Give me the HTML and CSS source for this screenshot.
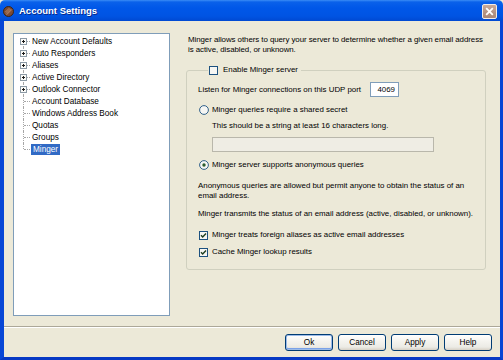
FILE: index.html
```html
<!DOCTYPE html>
<html>
<head>
<meta charset="utf-8">
<link rel="stylesheet" href="styles.css">
</head>
<body>
<div class="window">
  <div class="titlebar">
    <svg class="app-icon" width="11" height="11" viewBox="0 0 11 11">
      <circle cx="5.5" cy="5.5" r="5" fill="#7a4a33" stroke="#3a2418" stroke-width="1"/>
      <path d="M3 7.5 L7.5 3 M3.5 8.8 L8.8 3.5 M2.2 6.3 L6.3 2.2" stroke="#c89a7c" stroke-width="0.8"/>
    </svg>
    <span class="title">Account Settings</span>
    <div class="close">
      <svg width="9" height="9" viewBox="0 0 9 9"><path d="M1.2 1.2 L7.8 7.8 M7.8 1.2 L1.2 7.8" stroke="#fff" stroke-width="1.8"/></svg>
    </div>
  </div>
  <div class="frame">
    <div class="content">
      <div class="tree">
        <ul class="tree-list">
          <li class="node first"><span class="gutter"><svg class="plus" width="7" height="7" viewBox="0 0 7 7"><rect x="0.5" y="0.5" width="6" height="6" fill="#fbfbf8" stroke="#8c9aa6"/><path d="M2 3.5 H5 M3.5 2 V5" stroke="#1a1a1a"/></svg></span><span class="label">New Account Defaults</span></li>
          <li class="node"><span class="gutter"><svg class="plus" width="7" height="7" viewBox="0 0 7 7"><rect x="0.5" y="0.5" width="6" height="6" fill="#fbfbf8" stroke="#8c9aa6"/><path d="M2 3.5 H5 M3.5 2 V5" stroke="#1a1a1a"/></svg></span><span class="label">Auto Responders</span></li>
          <li class="node"><span class="gutter"><svg class="plus" width="7" height="7" viewBox="0 0 7 7"><rect x="0.5" y="0.5" width="6" height="6" fill="#fbfbf8" stroke="#8c9aa6"/><path d="M2 3.5 H5 M3.5 2 V5" stroke="#1a1a1a"/></svg></span><span class="label">Aliases</span></li>
          <li class="node"><span class="gutter"><svg class="plus" width="7" height="7" viewBox="0 0 7 7"><rect x="0.5" y="0.5" width="6" height="6" fill="#fbfbf8" stroke="#8c9aa6"/><path d="M2 3.5 H5 M3.5 2 V5" stroke="#1a1a1a"/></svg></span><span class="label">Active Directory</span></li>
          <li class="node"><span class="gutter"><svg class="plus" width="7" height="7" viewBox="0 0 7 7"><rect x="0.5" y="0.5" width="6" height="6" fill="#fbfbf8" stroke="#8c9aa6"/><path d="M2 3.5 H5 M3.5 2 V5" stroke="#1a1a1a"/></svg></span><span class="label">Outlook Connector</span></li>
          <li class="node"><span class="gutter"></span><span class="label">Account Database</span></li>
          <li class="node"><span class="gutter"></span><span class="label">Windows Address Book</span></li>
          <li class="node"><span class="gutter"></span><span class="label">Quotas</span></li>
          <li class="node"><span class="gutter"></span><span class="label">Groups</span></li>
          <li class="node last"><span class="gutter"></span><span class="label selected">Minger</span></li>
        </ul>
      </div>
      <div class="panel">
        <p class="desc">Minger allows others to query your server to determine whether a given email address<br>is active, disabled, or unknown.</p>
        <fieldset class="group">
          <legend class="legend">
            <span class="opt">
              <svg class="box" width="9" height="9" viewBox="0 0 9 9"><rect x="0.5" y="0.5" width="8" height="8" fill="#f6f6f3" stroke="#1c5180"/></svg>
              <span>Enable Minger server</span>
            </span>
          </legend>
          <div class="port-row">
            <span>Listen for Minger connections on this UDP port</span>
            <span class="edit port">4069</span>
          </div>
          <div class="opt r1">
            <svg class="box" width="10" height="10" viewBox="0 0 10 10"><circle cx="5" cy="5" r="4.4" fill="#f6f6f3" stroke="#1c5180" stroke-width="0.9"/></svg>
            <span>Minger queries require a shared secret</span>
          </div>
          <div class="hint">This should be a string at least 16 characters long.</div>
          <div class="edit secret"></div>
          <div class="opt r2">
            <svg class="box" width="10" height="10" viewBox="0 0 10 10"><circle cx="5" cy="5" r="4.4" fill="#f6f6f3" stroke="#1c5180" stroke-width="0.9"/><circle cx="5" cy="5" r="1.7" fill="#2d5c2d"/></svg>
            <span>Minger server supports anonymous queries</span>
          </div>
          <p class="note anon">Anonymous queries are allowed but permit anyone to obtain the status of an<br>email address.</p>
          <p class="note transmit">Minger transmits the status of an email address (active, disabled, or unknown).</p>
          <div class="opt c1">
            <svg class="box" width="9" height="9" viewBox="0 0 9 9"><rect x="0.5" y="0.5" width="8" height="8" fill="#f6f6f3" stroke="#1c5180"/><path d="M2 4.3 L3.7 6.1 L7 2.6" fill="none" stroke="#1e3d1e" stroke-width="1.4"/></svg>
            <span>Minger treats foreign aliases as active email addresses</span>
          </div>
          <div class="opt c2">
            <svg class="box" width="9" height="9" viewBox="0 0 9 9"><rect x="0.5" y="0.5" width="8" height="8" fill="#f6f6f3" stroke="#1c5180"/><path d="M2 4.3 L3.7 6.1 L7 2.6" fill="none" stroke="#1e3d1e" stroke-width="1.4"/></svg>
            <span>Cache Minger lookup results</span>
          </div>
        </fieldset>
      </div>
    </div>
    <div class="separator"></div>
    <div class="buttons">
      <button class="btn default">Ok</button>
      <button class="btn">Cancel</button>
      <button class="btn">Apply</button>
      <button class="btn">Help</button>
    </div>
  </div>
</div>
</body>
</html>
```
FILE: styles.css
```css
* { box-sizing: border-box; }
html, body { margin: 0; padding: 0; }
body {
  width: 503px;
  height: 360px;
  overflow: hidden;
  font-family: "Liberation Sans", Arial, sans-serif;
  font-size: 8.2px;
  color: #000;
  background: #ece9d8;
}
.window {
  width: 503px;
  height: 360px;
  display: flex;
  flex-direction: column;
}
.titlebar {
  height: 21px;
  flex: none;
  display: flex;
  align-items: center;
  padding: 0 6px 0 3px;
  background: linear-gradient(to bottom, #3b8cf5 0px, #0a61ea 2px, #0057e8 8px, #0054e3 16px, #0049d2 21px);
  border-radius: 5px 5px 0 0;
}
.app-icon { flex: none; margin-top: 1px; }
.title {
  margin-left: 5px;
  color: #fff;
  font-weight: bold;
  font-size: 9.5px;
  text-shadow: 1px 1px 0 #0a2a8a;
  flex: 1;
}
.close {
  width: 15px;
  height: 15px;
  border: 1px solid #f1ece8;
  border-radius: 2px;
  background: linear-gradient(to bottom, #c9aa9a, #b39282 60%, #a98878);
  display: flex;
  align-items: center;
  justify-content: center;
  margin-top: 1px;
}
.frame {
  flex: 1;
  display: flex;
  flex-direction: column;
  border-left: 4px solid #0847d6;
  border-right: 3px solid #0844d4;
  border-bottom: 3px solid #0739c4;
  background: #ece9d8;
  min-height: 0;
}
.content {
  flex: 1;
  display: flex;
  padding: 12px 14px 0 9px;
  min-height: 0;
}
.tree {
  width: 157px;
  height: 283px;
  flex: none;
  background: #fff;
  border: 1px solid #7f9db9;
  padding-top: 1px;
}
.tree-list {
  list-style: none;
  margin: 0;
  padding: 0;
}
.node {
  height: 12px;
  display: flex;
  align-items: center;
}
.gutter {
  position: relative;
  width: 17px;
  height: 12px;
  flex: none;
}
.gutter::before {
  content: "";
  position: absolute;
  left: 9px;
  top: 0;
  height: 12px;
  border-left: 1px dotted #a6a6a6;
}
.first .gutter::before { top: 6px; height: 6px; }
.last .gutter::before { height: 6px; }
.gutter::after {
  content: "";
  position: absolute;
  left: 10px;
  top: 6px;
  width: 6px;
  border-top: 1px dotted #a6a6a6;
}
.plus {
  position: absolute;
  left: 6px;
  top: 3px;
  z-index: 1;
}
.label {
  padding: 0 1px;
  line-height: 11px;
  white-space: nowrap;
}
.label.selected {
  background: #316ac5;
  color: #fff;
  padding: 0 2px;
}
.panel {
  flex: 1;
  margin-left: 16px;
  display: flex;
  flex-direction: column;
  font-size: 7.9px;
  white-space: nowrap;
}
.desc {
  margin: 2px 0 0 2px;
  line-height: 10px;
  letter-spacing: -0.06px;
}
.group {
  margin: 10px 0 0 0;
  padding: 0 10px 12px 11px;
  border: 1px solid #d0d0bf;
  border-radius: 3px;
  min-width: 0;
}
.legend {
  padding: 0 3px 0 1px;
  margin-left: 10px;
  line-height: 10px;
}
.opt {
  display: flex;
  align-items: center;
  line-height: 10px;
}
.opt .box { flex: none; margin-right: 4px; }
.legend .opt .box { margin-right: 5px; }
.port-row {
  margin-top: 7px;
  display: flex;
  align-items: center;
  height: 15px;
}
.edit {
  display: block;
  border: 1px solid #7f9db9;
  background: #fff;
  height: 15px;
}
.port {
  margin-left: auto;
  margin-right: 76px;
  width: 29px;
  text-align: right;
  padding-right: 3px;
  line-height: 13px;
}
.r1 { margin-top: 8px; margin-left: 1px; }
.r1 .box, .r2 .box { margin-right: 3px; }
.hint {
  margin-top: 6px;
  margin-left: 14px;
  line-height: 10px;
}
.secret {
  margin-top: 6px;
  margin-left: 14px;
  width: 222px;
  background: #efede4;
  border-color: #b9b7ab;
}
.r2 { margin-top: 8px; margin-left: 1px; }
.note {
  margin: 0;
  line-height: 10px;
}
.anon { margin-top: 11px; }
.transmit { margin-top: 8px; }
.c1 { margin-top: 11px; margin-left: 1px; }
.c2 { margin-top: 7px; margin-left: 1px; }
.separator {
  flex: none;
  margin-top: 10px;
  height: 2px;
  border-top: 1px solid #aca899;
  border-bottom: 1px solid #fff;
}
.buttons {
  flex: none;
  display: flex;
  justify-content: flex-end;
  gap: 5px;
  padding: 6px 8px 6px 0;
}
.btn {
  width: 48px;
  height: 17px;
  padding: 0;
  font-family: "Liberation Sans", Arial, sans-serif;
  font-size: 8.2px;
  color: #000;
  border: 1px solid #003c74;
  border-radius: 3px;
  background: linear-gradient(to bottom, #ffffff 0%, #f5f4ef 40%, #ecebe5 80%, #d6d0c5 100%);
}
.btn.default {
  box-shadow: inset 0 0 0 1px #9cbbe8, inset 0 -1px 0 1px #7ba2e7;
}
```
